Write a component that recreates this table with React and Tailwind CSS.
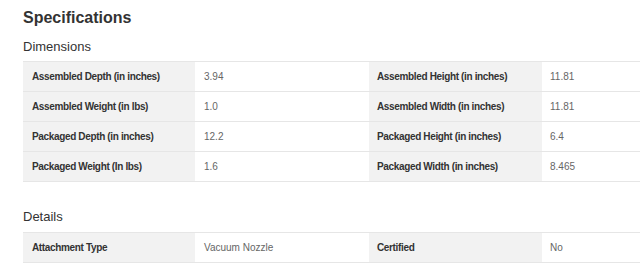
import React from "react";

const dimensions = [
  ["Assembled Depth (in inches)", "3.94", "Assembled Height (in inches)", "11.81"],
  ["Assembled Weight (in lbs)", "1.0", "Assembled Width (in inches)", "11.81"],
  ["Packaged Depth (in inches)", "12.2", "Packaged Height (in inches)", "6.4"],
  ["Packaged Weight (In lbs)", "1.6", "Packaged Width (in inches)", "8.465"],
];

const details = [["Attachment Type", "Vacuum Nozzle", "Certified", "No"]];

function SpecTable({ rows }) {
  return (
    <div className="w-[700px] border-b border-[#e6e6e6]">
      {rows.map((r, i) => (
        <div key={i} className="flex h-[30px] border-t border-[#e6e6e6]">
          <div className="w-[172px] bg-[#f2f2f2] pl-[9px] flex items-center font-bold text-[10px] tracking-[-0.35px] text-[#333]">
            {r[0]}
          </div>
          <div className="w-[174px] pl-[9px] flex items-center text-[10px] text-[#666]">
            {r[1]}
          </div>
          <div className="w-[173px] bg-[#f2f2f2] pl-[8px] flex items-center font-bold text-[10px] tracking-[-0.35px] text-[#333]">
            {r[2]}
          </div>
          <div className="flex-1 pl-[8px] flex items-center text-[10px] text-[#666]">
            {r[3]}
          </div>
        </div>
      ))}
    </div>
  );
}

export default function App() {
  return (
    <div className="w-[640px] h-[276px] overflow-hidden bg-white pl-[23px] font-['Liberation_Sans',Arial,sans-serif]">
      <h1 className="pt-[8px] text-[16px] leading-[20px] font-bold text-[#333]">Specifications</h1>
      <h2 className="mt-[11px] text-[13px] leading-[16px] text-[#333]">Dimensions</h2>
      <div className="mt-[6px]">
        <SpecTable rows={dimensions} />
      </div>
      <h2 className="mt-[27px] text-[13px] leading-[16px] text-[#333]">Details</h2>
      <div className="mt-[7px]">
        <SpecTable rows={details} />
      </div>
    </div>
  );
}
